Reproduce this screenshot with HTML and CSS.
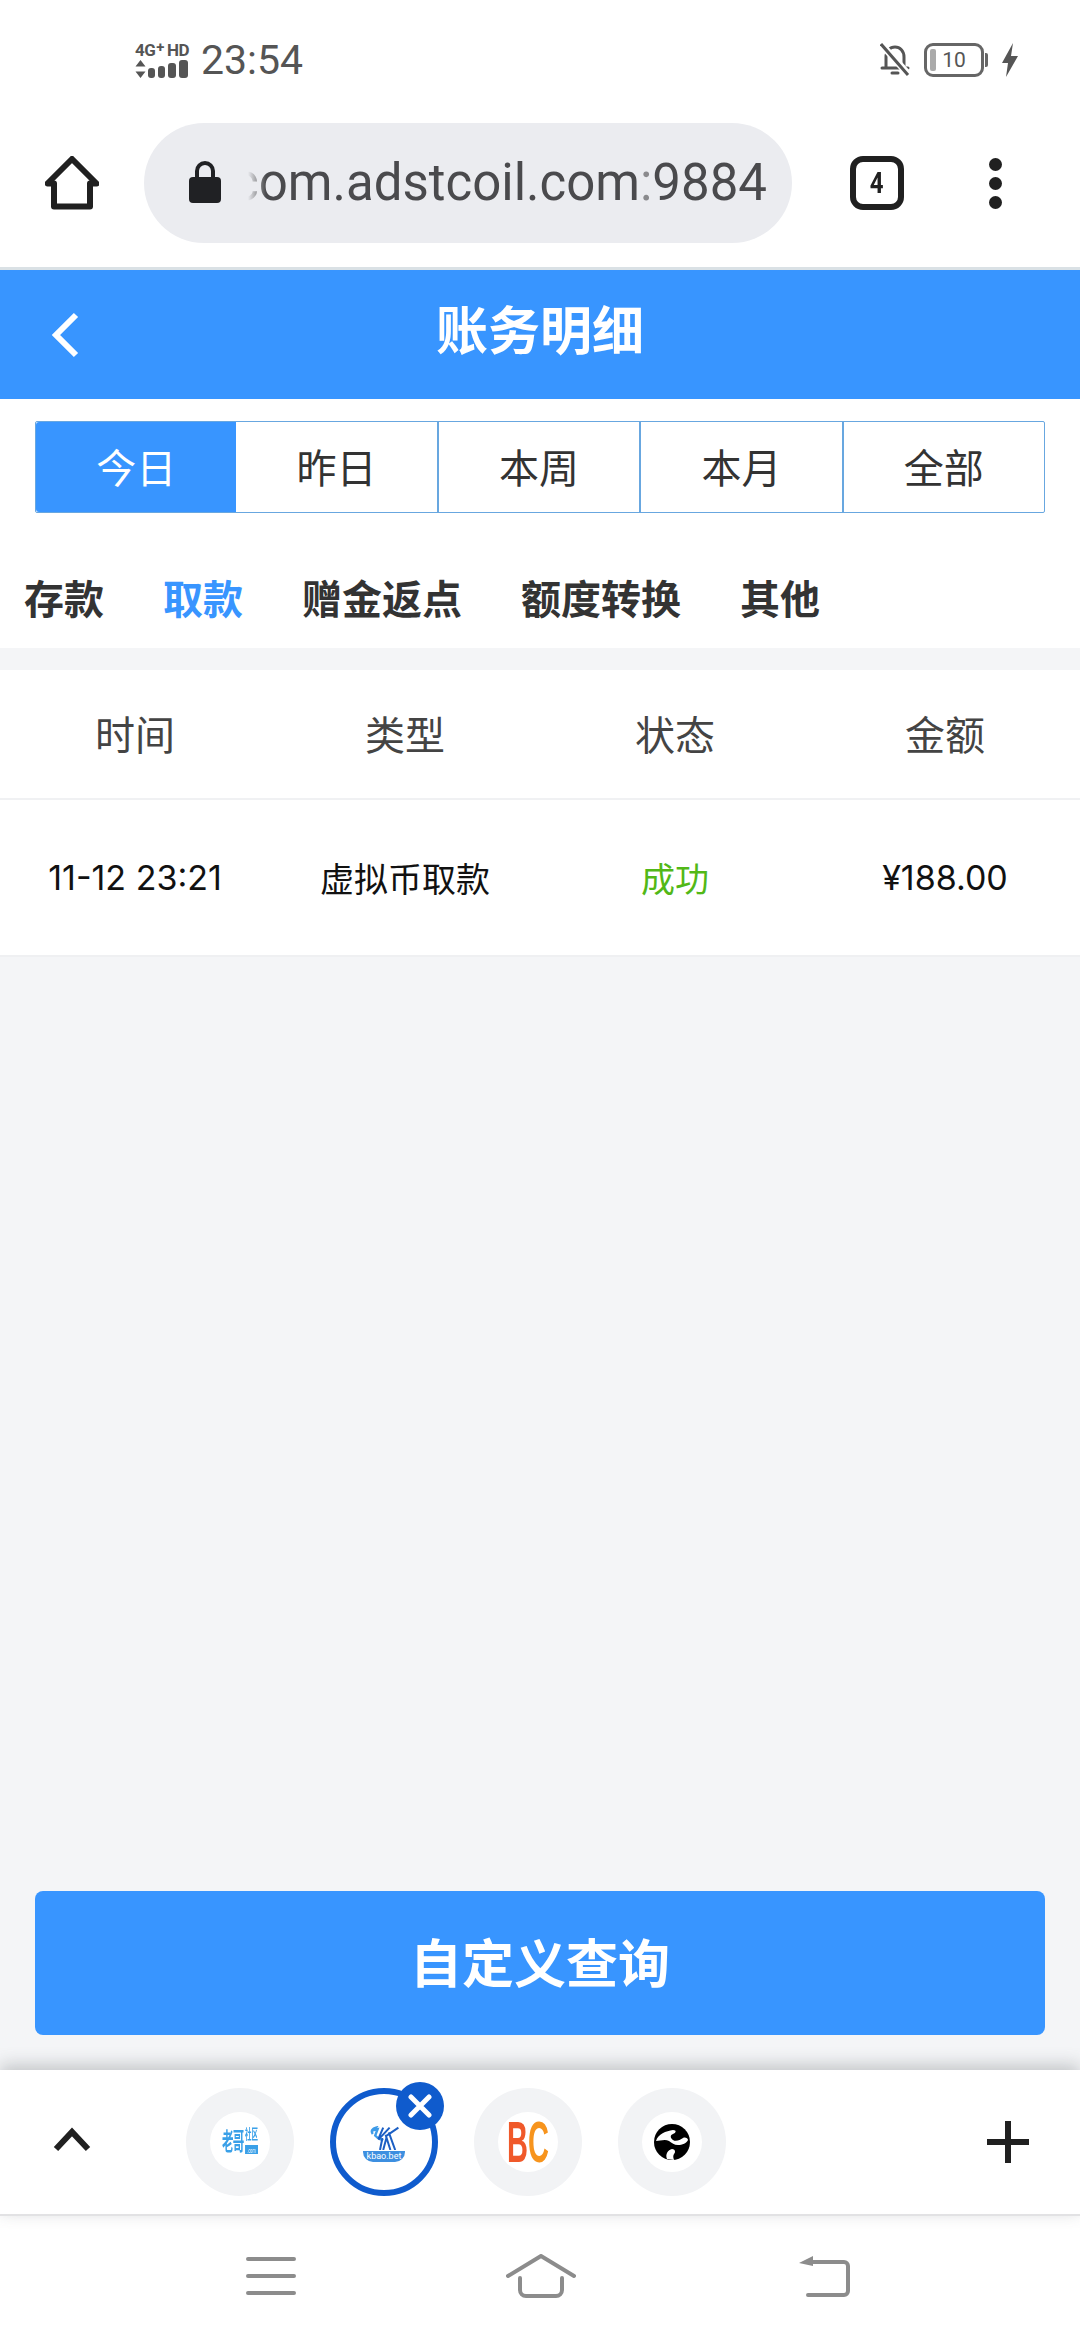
FILE: index.html
```html
<!DOCTYPE html>
<html lang="zh-CN">
<head>
<meta charset="utf-8">
<title>账务明细</title>
<link rel="stylesheet" href="styles.css">
</head>
<body>
<div class="screen">
  <div class="statusbar">
    <div class="net">
      <div class="net-text"><span>4G</span><sup>+</sup><span class="hd">HD</span></div>
      <svg class="signal" width="56" height="18" viewBox="0 0 56 18"><path d="M5.500 0l5 6.500H.5zM5.500 18l5-6.500H.5z" fill="#555"/><rect x="13" y="8" width="7" height="10" rx="3" fill="#555"/><rect x="23" y="6" width="7" height="12" rx="3" fill="#555"/><rect x="33" y="3" width="8" height="15" rx="3" fill="#555"/><rect x="44" y="0" width="9" height="18" rx="3" fill="#555"/></svg>
    </div>
    <span class="clock">23:54</span>
    <div class="status-right">
      <svg width="30" height="36" viewBox="0 0 30 36"><path d="M6 25V15C6 9 10 5 15 5s9 4 9 10v10M2 26h26M12 31h6" fill="none" stroke="#555" stroke-width="3" stroke-linecap="round"/><path d="M2 3l26 29" stroke="#fff" stroke-width="7"/><path d="M1 2l27 31" stroke="#555" stroke-width="3"/></svg>
      <div class="battery"><div class="battery-body"><i class="battery-level"></i><span>10</span></div><i class="battery-cap"></i></div>
      <svg width="16" height="34" viewBox="0 0 16 34"><path d="M11 0L0 20h6l-2 14 12-21H9z" fill="#555"/></svg>
    </div>
  </div>

  <div class="browserbar">
    <svg class="home-icon" width="54" height="54" viewBox="0 0 54 54"><path d="M27 3L2.500 27.500H9V50.500H45V27.500H51.500Z" fill="none" stroke="#202020" stroke-width="6" stroke-linejoin="round"/></svg>
    <div class="urlpill">
      <svg class="lock" width="34" height="42" viewBox="0 0 34 42"><path d="M9 18V10a8 8 0 0 1 16 0v8" fill="none" stroke="#202124" stroke-width="4"/><rect x="1" y="16" width="32" height="26" rx="4" fill="#202124"/></svg>
      <div class="url"><span>com.adstcoil.com<em>:</em>9884</span></div>
    </div>
    <div class="tabcount"><span>4</span></div>
    <div class="dots"><i></i><i></i><i></i></div>
  </div>

  <header class="titlebar">
    <svg class="back" width="30" height="46" viewBox="0 0 30 46"><path d="M25 3L5 23l20 20" fill="none" stroke="#fff" stroke-width="6"/></svg>
    <h1>账务明细</h1>
  </header>

  <main class="content">
    <div class="top">
      <div class="segments">
        <div class="seg active">今日</div>
        <div class="seg">昨日</div>
        <div class="seg">本周</div>
        <div class="seg">本月</div>
        <div class="seg">全部</div>
      </div>
      <nav class="tabs">
        <span>存款</span>
        <span class="current">取款</span>
        <span>赠金返点</span>
        <span>额度转换</span>
        <span>其他</span>
      </nav>
    </div>
    <div class="table">
      <div class="thead"><span>时间</span><span>类型</span><span>状态</span><span>金额</span></div>
      <div class="trow"><span>11-12 23:21</span><span>虚拟币取款</span><span class="ok">成功</span><span>¥188.00</span></div>
    </div>
    <div class="spacer"></div>
    <div class="btn">自定义查询</div>
  </main>

  <div class="tabstrip">
    <svg class="chev" width="38" height="26" viewBox="0 0 38 26"><path d="M3 22L19 5l16 17" fill="none" stroke="#202020" stroke-width="6"/></svg>
    <div class="bubbles">
      <div class="bubble">
        <div class="fav fav-lg">
          <div class="lg-mark">
            <span class="lg-main">老哥</span>
            <span class="lg-side"><span class="lg-sub">社区</span><span class="lg-tag">.com</span></span>
          </div>
        </div>
      </div>
      <div class="bubble selected">
        <div class="fav fav-k">
          <svg width="32" height="24" viewBox="0 0 40 30"><path d="M6 10C3 6 6 3 10 2l-2 3 4-1-3 8c3 4 8 5 10 6" fill="none" stroke="#3d9be8" stroke-width="3"/><path d="M19 2l-6 14M27 2L13 17M26 8l8 22M22 11l6 19M18 15l-3 15M23 15l-4 15M38 2L22 13" fill="none" stroke="#1c5fc4" stroke-width="2.500"/></svg>
          <span class="k-tag">kbao.bet</span>
        </div>
        <div class="close"><svg width="24" height="24" viewBox="0 0 24 24"><path d="M3 3l18 18M21 3L3 21" stroke="#fff" stroke-width="5" stroke-linecap="round"/></svg></div>
      </div>
      <div class="bubble">
        <div class="fav fav-bc"><span class="bc-mark"><span class="b">B</span><span class="c">C</span></span></div>
      </div>
      <div class="bubble">
        <div class="fav">
          <svg width="36" height="36" viewBox="0 0 36 36"><circle cx="18" cy="18" r="18" fill="#000"/><path d="M2 17C4 10 12 7 19 6c4 0 3 3 0 4-3 1-3 4 0 6 3 2 7 0 10-2 2-1 5 0 5 2-1 3-6 5-10 5-4 0-6-2-9-4-4-2-9 0-13 0z" fill="#fff"/><path d="M13 35c-2-5 1-9 5-10 3 0 4 3 2 5-1 2-1 3 0 6z" fill="#fff"/></svg>
        </div>
      </div>
    </div>
    <svg class="plus" width="42" height="42" viewBox="0 0 42 42"><path d="M21 0v42M0 21h42" stroke="#202020" stroke-width="6"/></svg>
  </div>

  <div class="navbar">
    <svg width="50" height="38" viewBox="0 0 50 38"><path d="M2 2h46M2 19h46M2 36h46" stroke="#8c8c8c" stroke-width="4" stroke-linecap="round"/></svg>
    <svg width="70" height="44" viewBox="0 0 70 44"><path d="M2 22L35 2l33 20" fill="none" stroke="#8c8c8c" stroke-width="4" stroke-linecap="round" stroke-linejoin="round"/><path d="M14 24v12a6 6 0 0 0 6 6h30a6 6 0 0 0 6-6V24" fill="none" stroke="#8c8c8c" stroke-width="4" stroke-linecap="round"/></svg>
    <svg width="52" height="42" viewBox="0 0 52 42"><path d="M15 7h31a4 4 0 0 1 4 4v25a4 4 0 0 1-4 4H10" fill="none" stroke="#8c8c8c" stroke-width="4" stroke-linecap="round"/><path d="M1 8L15 1v10z" fill="#8c8c8c"/></svg>
  </div>
</div>
</body>
</html>
```

FILE: styles.css
```css
* { box-sizing: border-box; }
html, body { margin: 0; padding: 0; }
body { font-family: Roboto, "Noto Sans CJK SC", sans-serif; background: #fff; }
.screen { width: 1080px; height: 2340px; display: flex; flex-direction: column; overflow: hidden; }

.statusbar { height: 120px; flex: none; display: flex; align-items: center; padding: 0 62px 0 135px; color: #555; }
.net { width: 66px; display: flex; flex-direction: column; gap: 1px; margin-top: -2px; }
.net-text { display: flex; align-items: flex-start; font: 700 17px/18px Roboto, sans-serif; letter-spacing: -0.500px; }
.net-text sup { font-size: 15px; line-height: 12px; margin: 0 3px 0 1px; vertical-align: baseline; }
.clock { font-size: 41px; line-height: 48px; letter-spacing: 0; }
.status-right { margin-left: auto; display: flex; align-items: center; gap: 14px; }
.battery { display: flex; align-items: center; gap: 1px; }
.battery-body { width: 60px; height: 34px; border: 3px solid #666; border-radius: 9px; display: flex; align-items: center; padding: 3px; }
.battery-level { width: 6px; height: 100%; background: #aaa; border-radius: 2px; }
.battery-body span { flex: 1; text-align: center; font-size: 21px; line-height: 24px; color: #555; padding-right: 6px; }
.battery-cap { width: 3px; height: 14px; background: #666; border-radius: 0 2px 2px 0; }

.browserbar { height: 150px; flex: none; display: flex; align-items: center; padding-bottom: 21px; border-bottom: 3px solid #dae1e5; }
.home-icon { margin-left: 45px; flex: none; }
.urlpill { width: 648px; height: 120px; margin-left: 45px; border-radius: 60px; background: #ebecf0; display: flex; align-items: center; padding: 0 25px 0 44px; flex: none; }
.lock { flex: none; margin-top: -2px; }
.url { flex: 1; min-width: 0; margin-left: 26px; display: flex; justify-content: flex-end; overflow: hidden; white-space: nowrap; font-size: 51px; line-height: 60px; color: #4a4a4d; -webkit-mask-image: linear-gradient(to right, transparent 0, #000 18px); mask-image: linear-gradient(to right, transparent 0, #000 18px); }
.url span { flex: none; }
.url em { font-style: normal; color: #8a8a8d; }
.tabcount { width: 54px; height: 54px; margin-left: 58px; flex: none; border: 6px solid #202020; border-radius: 13px; display: flex; align-items: center; justify-content: center; font: 700 30px/1 Roboto, sans-serif; color: #202020; }
.tabcount span { display: block; transform: scaleX(0.8); }
.dots { margin-left: 85px; display: flex; flex-direction: column; gap: 6px; }
.dots i { display: block; width: 13px; height: 13px; border-radius: 50%; background: #202020; }

.titlebar { height: 129px; flex: none; background: #3895ff; display: flex; align-items: center; justify-content: center; position: relative; padding-bottom: 3px; }
.titlebar h1 { margin: 0; font-size: 52px; line-height: 70px; font-weight: 700; color: #fff; }
.back { position: absolute; left: 51px; top: 42px; }

.content { flex: 1; min-height: 0; background: #f4f5f7; display: flex; flex-direction: column; }
.top { background: #fff; height: 249px; flex: none; padding-top: 22px; }
.segments { margin: 0 35px; height: 92px; display: flex; border: 1px solid #68a7e0; border-radius: 2px; }
.seg { flex: 1; display: flex; align-items: center; justify-content: center; font-size: 40px; color: #333; border-left: 2px solid #68a7e0; padding-bottom: 2px; }
.seg:first-child { border-left: 0; }
.seg.active { background: #3895ff; color: #fff; border-radius: 3px 0 0 3px; }
.seg.active + .seg { border-left: 0; }
.tabs { display: flex; gap: 59px; padding: 60px 0 0 24px; font-size: 40px; line-height: 56px; font-weight: 700; color: #333; }
.tabs .current { color: #3895ff; }

.table { margin-top: 22px; background: #fff; flex: none; }
.thead, .trow { display: grid; grid-template-columns: repeat(4, 1fr); text-align: center; align-items: center; }
.thead { height: 130px; border-bottom: 2px solid #f0f1f3; font-size: 40px; color: #444; padding-bottom: 2px; }
.trow { height: 157px; border-bottom: 2px solid #eff0f2; font-family: Inter, "Noto Sans CJK SC", sans-serif; font-size: 34px; color: #111; padding-bottom: 1px; }
.trow .ok { color: #52b817; }
.spacer { flex: 1; }

.btn { margin: 0 35px 35px; height: 144px; flex: none; background: #3895ff; color: #fff; border-radius: 8px; font-size: 52px; font-weight: 700; display: flex; align-items: center; justify-content: center; padding-bottom: 5px; }

.tabstrip { height: 146px; flex: none; background: #fff; border-bottom: 2px solid #e2e2e4; display: flex; align-items: center; position: relative; padding-bottom: 1px; box-shadow: 0 -5px 16px rgba(90, 95, 100, 0.32); }
.chev { margin-left: 53px; flex: none; margin-top: -4px; }
.bubbles { margin-left: 95px; display: flex; gap: 36px; }
.bubble { width: 108px; height: 108px; border-radius: 50%; background: #f2f3f5; display: flex; align-items: center; justify-content: center; position: relative; }
.bubble.selected { background: #fff; border: 6px solid #0f5bcd; }
.fav { width: 60px; height: 60px; border-radius: 50%; background: #fff; display: flex; flex-direction: column; align-items: center; justify-content: center; overflow: hidden; }
.fav-lg { overflow: visible; color: #3aa0e8; font-weight: 700; }
.lg-mark { display: flex; gap: 2px; flex: none; white-space: nowrap; transform: scale(0.72, 1.5); }
.lg-main { font-size: 16px; line-height: 22px; letter-spacing: -1px; }
.lg-side { display: flex; flex-direction: column; align-items: stretch; }
.lg-sub { font-size: 9px; line-height: 13px; white-space: nowrap; }
.lg-tag { font-size: 5px; line-height: 6px; background: #3aa0e8; color: #fff; text-align: center; font-weight: 400; }
.fav-k { background: transparent; overflow: visible; width: 70px; height: 62px; gap: 1px; margin-top: 4px; }
.k-tag { font-size: 9px; line-height: 11px; width: 42px; text-align: center; background: #3d8fe0; color: #fff; border-radius: 0 0 10px 10px; white-space: nowrap; }
.fav-bc { overflow: visible; font: 700 58px/60px "Liberation Sans", sans-serif; }
.bc-mark { display: block; flex: none; transform: scaleX(0.5); white-space: nowrap; }
.fav-bc .b { color: #f0592a; }
.fav-bc .c { color: #f7941d; }
.close { position: absolute; right: -12px; top: -12px; width: 48px; height: 48px; border-radius: 50%; background: #0f5bcd; display: flex; align-items: center; justify-content: center; }
.plus { margin-left: auto; margin-right: 51px; flex: none; }

.navbar { height: 124px; flex: none; background: #fff; display: flex; align-items: center; padding-left: 246px; padding-bottom: 5px; }
.navbar svg:nth-child(2) { margin-left: 210px; }
.navbar svg:nth-child(3) { margin-left: 222px; }
```
